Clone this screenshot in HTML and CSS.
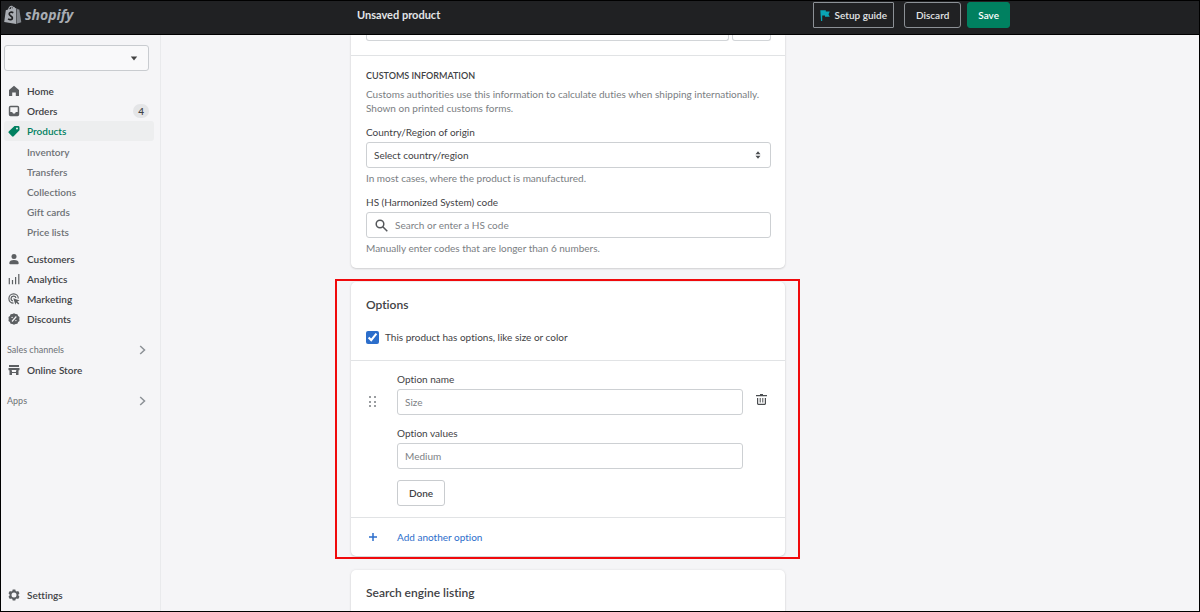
FILE: index.html
```html
<!doctype html>
<html lang="en">
<head>
<meta charset="utf-8">
<meta name="viewport" content="width=device-width, initial-scale=1.0">
<title>Unsaved product</title>
<link rel="stylesheet" href="styles.css">
</head>
<body>
<header class="topbar">
  <a class="logo" href="#">
    <svg width="18" height="20" viewBox="0 0 18 20" aria-hidden="true">
      <path fill="#a9adb3" d="M1.8 5.2 4 4.5C4.5 2.300 6 .6 7.600.7c.7 0 1.200.5 1.500 1.200 1.100-.2 1.700.4 2.100 1.400l.8-.2.2 15.900L.2 17zM5.200 4.200l1.700-.5c.2-.9.4-1.500.8-2C6.500 1.900 5.600 2.900 5.200 4.200zm2.800-.8 1-.3-.4-1.200c-.3.4-.5.900-.6 1.500z"/>
      <path fill="#82868c" d="m12.500 3.100 1.200 1.200 1.600.2 2 12.700-4.700 1.600z"/>
      <path fill="none" stroke="#202123" stroke-width="1.700" d="M9.300 7.700C7.500 6.700 5.200 7.200 5.200 9c0 1.900 3.200 2 3.200 4 0 1.900-2.400 2.200-4.300.9"/>
    </svg>
    <span>shopify</span>
  </a>
  <div class="context">
    <h1>Unsaved product</h1>
    <div class="actions">
      <button type="button" class="btn-dark guide">
        <svg width="10" height="11" viewBox="0 0 10 11" aria-hidden="true"><path fill="#0aa5b5" d="M.3.2h5.500v1.300h4L8.500 4.200l1.300 2.500H5V5.500H2.200V11H1z"/></svg>
        Setup guide
      </button>
      <button type="button" class="btn-dark">Discard</button>
      <button type="button" class="btn-save">Save</button>
    </div>
  </div>
</header>

<div class="frame">
  <nav class="sidebar">
    <div class="store">
      <select aria-label="Store"><option></option></select>
      <svg class="caret" width="8" height="5" viewBox="0 0 8 5" aria-hidden="true"><path fill="#444" d="M.8.500h6.400L4 4.500z"/></svg>
    </div>

    <ul class="nav">
      <li><a href="#"><svg viewBox="0 0 12 12"><path d="M6 .7 1 4.900V11h3.200V7.500h3.600V11H11V4.900z"/></svg>Home</a></li>
      <li><a href="#"><svg viewBox="0 0 12 12"><path fill-rule="evenodd" d="M2.500.8h7A1.700 1.700 0 0 1 11.200 2.500v7a1.700 1.700 0 0 1-1.700 1.700h-7A1.700 1.700 0 0 1 .8 9.500v-7A1.700 1.700 0 0 1 2.500.8zm-.2 1.500V7h1.900l.8 1.400h2L7.800 7h1.900V2.300z"/></svg>Orders<span class="count">4</span></a></li>
      <li><a class="active" href="#"><svg viewBox="0 0 12 12"><path fill-rule="evenodd" d="M6.500 1h3.700a1.300 1.300 0 0 1 1.300 1.300V5.300L5.700 11.200a1.200 1.200 0 0 1-1.700 0L.9 8a1.200 1.200 0 0 1 0-1.700zM9 2.500a1 1 0 1 0 0 2 1 1 0 0 0 0-2z"/></svg>Products</a></li>
    </ul>
    <ul class="nav sub">
      <li><a href="#">Inventory</a></li>
      <li><a href="#">Transfers</a></li>
      <li><a href="#">Collections</a></li>
      <li><a href="#">Gift cards</a></li>
      <li><a href="#">Price lists</a></li>
    </ul>
    <ul class="nav">
      <li><a href="#"><svg viewBox="0 0 12 12"><circle cx="6" cy="3.500" r="2.500"/><path d="M1.300 10.300C1.300 8 3 7 6 7s4.700 1 4.700 3.300c0 .6-.3.900-.9.900H2.200c-.6 0-.9-.3-.9-.9z"/></svg>Customers</a></li>
      <li><a href="#"><svg viewBox="0 0 12 12"><path d="M.7 5h1.200v6.300H.7zM3.900 7h1.200v4.300H3.900zM7 4h1.200v7.300H7zM10.200 1h1.200v10.300h-1.200z"/></svg>Analytics</a></li>
      <li><a href="#"><svg viewBox="0 0 12 12"><g fill="none" stroke="#5c5f62" stroke-width="1.200"><path d="M10.300 5.500A4.700 4.700 0 1 0 5.500 10.200M8 5A2.500 2.500 0 1 0 5 8"/></g><path d="m5.300 5.200 6.300 2.300-2.300 1 2 2-1 1-2-2-.9 2.200z"/></svg>Marketing</a></li>
      <li><a href="#"><svg viewBox="0 0 12 12"><path d="m6 .2 1.600.9 1.800.1.700 1.700L11.500 4l-.2 2 .2 2-1.400 1.100-.7 1.700-1.800.1-1.600.9-1.600-.9-1.800-.1-.7-1.700L.5 8l.2-2-.2-2 1.400-1.100.7-1.700 1.800-.1z"/><path d="m4 8.500 4.300-5" stroke="#f5f5f7" stroke-width="1.200"/><circle cx="4.100" cy="4.400" r=".7" fill="#f5f5f7"/><circle cx="7.900" cy="7.600" r=".7" fill="#f5f5f7"/></svg>Discounts</a></li>
    </ul>

    <a class="group" href="#">Sales channels<svg width="7" height="10" viewBox="0 0 7 10" aria-hidden="true"><path d="M1.200 1 5.500 5 1.200 9"/></svg></a>
    <ul class="nav">
      <li><a href="#"><svg viewBox="0 0 12 12"><path d="M1 1h10v2H1zM.5 4h11v2L10 7H8.500L8 6H4l-.5 1H2L.5 6zM1.500 7H4v1h4V7h2.500v4H8V9H4v2H1.500z"/></svg>Online Store</a></li>
    </ul>
    <a class="group" href="#">Apps<svg width="7" height="10" viewBox="0 0 7 10" aria-hidden="true"><path d="M1.200 1 5.500 5 1.200 9"/></svg></a>

    <ul class="nav settings">
      <li><a href="#"><svg viewBox="0 0 12 12"><path fill-rule="evenodd" d="M4.700.4h2.600l.4 1.500 1 .6 1.500-.5 1.300 2.300L10.400 5.400v1.200l1.100 1.100-1.300 2.300-1.500-.5-1 .6-.4 1.500H4.700l-.4-1.500-1-.6-1.500.5L.5 7.700l1.100-1.100V5.400L.5 4.300 1.800 2l1.500.5 1-.6zM6 3.500a2.500 2.500 0 1 0 0 5 2.500 2.500 0 0 0 0-5z"/></svg>Settings</a></li>
    </ul>
  </nav>

  <main class="content">
    <section class="card">
      <div class="weight">
        <div class="weight-value"></div>
        <div class="weight-unit"></div>
      </div>
      <div class="section customs">
        <h3>CUSTOMS INFORMATION</h3>
        <p>Customs authorities use this information to calculate duties when shipping internationally. Shown on printed customs forms.</p>

        <div class="field">
          <label for="country">Country/Region of origin</label>
          <div class="control">
            <select id="country"><option>Select country/region</option></select>
            <svg class="updown" width="6" height="8" viewBox="0 0 6 8" aria-hidden="true"><path fill="#4a4d50" d="M3 .2 5.500 3.200H.5zM3 7.800.5 4.800h5z"/></svg>
          </div>
          <p class="help">In most cases, where the product is manufactured.</p>
        </div>

        <div class="field">
          <label for="hs">HS (Harmonized System) code</label>
          <div class="control">
            <svg class="lens" width="13" height="13" viewBox="0 0 13 13" aria-hidden="true"><g fill="none" stroke="#54575a" stroke-width="1.500"><circle cx="5" cy="5" r="3.800"/><path d="m7.800 7.800 4.500 4.500"/></g></svg>
            <input class="with-icon" id="hs" type="text" placeholder="Search or enter a HS code">
          </div>
          <p class="help">Manually enter codes that are longer than 6 numbers.</p>
        </div>
      </div>
    </section>

    <section class="card highlighted">
      <div class="section options-head">
        <h2>Options</h2>
        <div class="check">
          <input type="checkbox" id="has-options" checked>
          <label for="has-options">This product has options, like size or color</label>
        </div>
      </div>
      <div class="section option">
        <svg class="drag" width="8" height="12" viewBox="0 0 8 12" aria-hidden="true"><path fill="#9a9da0" d="M0 0h2v2H0zM5 0h2v2H5zM0 5h2v2H0zM5 5h2v2H5zM0 9h2v2H0zM5 9h2v2H5z"/></svg>
        <div class="option-fields">
          <div class="field">
            <label for="option-name">Option name</label>
            <input id="option-name" type="text" placeholder="Size">
          </div>
          <div class="field">
            <label for="option-values">Option values</label>
            <input id="option-values" type="text" placeholder="Medium">
          </div>
          <button type="button" class="btn">Done</button>
        </div>
        <button type="button" class="trash" aria-label="Delete option">
          <svg width="11" height="12" viewBox="0 0 11 12" aria-hidden="true"><path fill="#4a4d50" d="M4 0h3v1h4v1.300H0V1h4zM1 4h1.200v5.800h6.600V4H10v6l-1 1H2l-1-1zM3.700 4h1v4.500h-1zM6.300 4h1v4.500h-1z"/></svg>
        </button>
      </div>
      <div class="section add">
        <a href="#"><svg width="10" height="10" viewBox="0 0 10 10" aria-hidden="true"><path d="M5 1v8M1 5h8" stroke="#2c6ecb" stroke-width="1.500"/></svg>Add another option</a>
      </div>
    </section>

    <section class="card">
      <div class="section options-head">
        <h2>Search engine listing</h2>
      </div>
    </section>
  </main>
</div>
</body>
</html>
```
FILE: styles.css
```css
* {
  box-sizing: border-box;
}
body {
  display: flex;
  flex-direction: column;
  height: 100vh;
  margin: 0;
  border: 1px solid #000;
  overflow: hidden;
  background: #f5f5f7;
  color: #3f4245;
  font-family: Lato, "Open Sans", sans-serif;
  font-size: 10px;
  font-variant-ligatures: none;
  line-height: 14px;
}
h1,
h2,
h3,
p,
ul {
  margin: 0;
  padding: 0;
}
a {
  color: inherit;
  text-decoration: none;
}
button,
input,
select {
  font: inherit;
  color: inherit;
}

/* top bar */
.topbar {
  display: flex;
  flex: none;
  height: 34px;
  background: #202123;
  border-bottom: 1px solid #000;
  color: #e3e5e7;
}
.logo {
  display: flex;
  align-items: center;
  gap: 3px;
  flex: none;
  width: 356px;
  padding: 0 3px 5px;
  color: #a9adb3;
  font-family: "Open Sans", sans-serif;
  font-size: 14px;
  font-style: italic;
  font-weight: 700;
}
.context {
  display: flex;
  align-items: flex-start;
  justify-content: space-between;
  flex: 1;
  max-width: 653px;
  padding-top: 1px;
}
h1 {
  font-size: 11px;
  font-weight: 700;
  line-height: 26px;
}
.actions {
  display: flex;
}
.actions button {
  height: 26px;
  padding: 0 11px;
  border: 1px solid #8c9196;
  border-radius: 3px;
  background: transparent;
  font-weight: 600;
}
.actions .guide {
  display: flex;
  align-items: center;
  gap: 5px;
  margin-right: 10px;
  padding: 0 6px;
  border-radius: 1px;
}
.actions .btn-save {
  margin-left: 6px;
  padding: 0 10px;
  border-color: #008060;
  background: #008060;
  color: #fff;
}

.frame {
  display: flex;
  flex: 1;
  min-height: 0;
}

/* sidebar */
.sidebar {
  display: flex;
  flex-direction: column;
  flex: none;
  width: 160px;
  padding: 10px 6px 6px 3px;
  border-right: 1px solid #e9eaec;
}
.store {
  position: relative;
  margin: 0 5px 10px 0;
}
.store select {
  display: block;
  width: 100%;
  height: 26px;
  appearance: none;
  border: 1px solid #c9ccd0;
  border-radius: 3px;
  background: #f9f9fa;
}
.caret {
  position: absolute;
  right: 11px;
  top: 11px;
}
.nav {
  list-style: none;
  font-weight: 600;
}
.nav a {
  display: flex;
  align-items: center;
  gap: 7px;
  height: 20px;
  padding: 0 5px 0 4px;
  border-radius: 3px;
}
.nav svg {
  width: 12px;
  height: 12px;
  fill: #5c5f62;
}
.nav .active {
  background: #edeeef;
  color: #008060;
}
.nav .active svg {
  fill: #008060;
}
.count {
  margin-left: auto;
  padding: 0 5px;
  border-radius: 7px;
  background: #e4e5e7;
}
.sub {
  margin: 1px 0 7px;
  color: #6d7175;
}
.sub a {
  padding-left: 23px;
}
.group {
  display: flex;
  align-items: center;
  justify-content: space-between;
  height: 20px;
  margin-top: 11px;
  padding: 0 8px 0 3px;
  color: #6d7175;
  font-size: 9px;
}
.group svg {
  fill: none;
  stroke: #8c9196;
  stroke-width: 1.5;
}
.settings {
  margin-top: auto;
}

/* product form */
.content {
  flex: 1;
  max-width: 644px;
  padding: 0 20px 0 190px;
  overflow: hidden;
}
.card {
  position: relative;
  margin-bottom: 14px;
  border-radius: 5px;
  background: #fff;
  box-shadow: 0 0 3px rgba(23, 24, 24, 0.08), 0 1px 2px rgba(0, 0, 0, 0.12);
}
.card:first-child {
  border-radius: 0 0 5px 5px;
}
.section + .section,
.customs {
  border-top: 1px solid #e1e3e5;
}
.weight {
  display: flex;
  gap: 3px;
  padding: 0 14px 14px 15px;
}
.weight div {
  height: 6px;
  border: 1px solid #d2d5d8;
  border-top: 0;
  border-radius: 0 0 3px 3px;
}
.weight-value {
  flex: 1;
}
.weight-unit {
  width: 39px;
}
.customs {
  padding: 13px 14px 13px 15px;
}
h2 {
  font-size: 12px;
  font-weight: 600;
  line-height: 16px;
}
h3 {
  margin-bottom: 4px;
  font-size: 9px;
  font-weight: 600;
  line-height: 14px;
}
.customs p {
  color: #7a7e82;
}
.field {
  display: flex;
  flex-direction: column;
  gap: 3px;
}
.customs .field {
  margin-top: 10px;
}
.control {
  position: relative;
}
.field input,
.field select {
  display: block;
  width: 100%;
  height: 26px;
  padding: 0 7px;
  appearance: none;
  border: 1px solid #cdd0d3;
  border-radius: 3px;
  background: #fff;
}
.field input::placeholder {
  color: #7d8185;
  opacity: 1;
}
.field .with-icon {
  padding-left: 28px;
}
.updown {
  position: absolute;
  right: 10px;
  top: 9px;
}
.lens {
  position: absolute;
  left: 9px;
  top: 7px;
}

.highlighted::after {
  content: "";
  position: absolute;
  inset: -3px -15px -3px -16px;
  border: 2px solid #f00a0c;
  pointer-events: none;
}
.options-head {
  padding: 15px 14px 16px 15px;
}
.check {
  display: flex;
  align-items: center;
  gap: 6px;
  margin-top: 17px;
}
.check input {
  width: 13px;
  height: 13px;
  margin: 0;
  accent-color: #2c6ecb;
}
.option {
  display: flex;
  align-items: flex-start;
  padding: 11px 14px 11px 15px;
}
.drag {
  margin: 24px 20px 0 3px;
}
.option-fields {
  flex: 1;
}
.option-fields .field {
  margin-bottom: 11px;
}
.btn {
  height: 26px;
  padding: 0 11px;
  border: 1px solid #c9cccf;
  border-radius: 3px;
  background: #fff;
  font-weight: 600;
}
.trash {
  display: flex;
  margin: 22px 4px 0 13px;
  padding: 0;
  border: 0;
  background: none;
}
.add {
  padding: 12px 14px 12px 15px;
  color: #2c6ecb;
}
.add a {
  display: flex;
  align-items: center;
  gap: 19px;
  padding-left: 2px;
}
```
